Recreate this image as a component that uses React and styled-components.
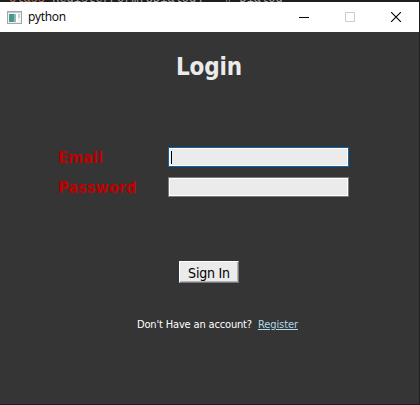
import React from "react";
import styled, { createGlobalStyle } from "styled-components";

const Global = createGlobalStyle`
  *{box-sizing:border-box}
  body{margin:0;background:#1e1e1e;overflow:hidden}
`;
const Screen = styled.div`
  width:420px;height:405px;display:flex;flex-direction:column;background:#1e1e1e;overflow:hidden;
`;
const Backdrop = styled.div`
  height:2px;flex:none;overflow:hidden;padding-left:9px;display:flex;align-items:flex-end;
`;
const Code = styled.span`
  font:12px/12px "Liberation Mono",monospace;color:#aaa;white-space:pre;margin-bottom:-3px;
`;
const Keyword = styled.span`color:#b98268;`;
const Window = styled.main`
  width:419px;height:402px;display:flex;flex-direction:column;background:#353535;
`;
const TitleBar = styled.header`
  height:30px;flex:none;background:#fff;display:flex;align-items:center;padding-left:7px;
`;
const Title = styled.span`
  font:12px/16px "Open Sans",sans-serif;color:#000;margin-left:6px;flex:1;letter-spacing:-.3px;
`;
const Control = styled.span`
  width:46px;height:30px;display:flex;align-items:center;justify-content:center;
`;
const Controls = styled.div`display:flex;`;
const Form = styled.form`
  display:flex;flex-direction:column;flex:1;font-family:"DejaVu Sans Condensed","DejaVu Sans",sans-serif;font-stretch:condensed;
`;
const Heading = styled.h1`
  margin:20px 0 0 176px;font-size:24px;line-height:30px;font-weight:700;color:#ebebeb;letter-spacing:-.2px;white-space:nowrap;
`;
const Fields = styled.div`
  margin:65px 0 0 58px;display:grid;grid-template-columns:110px 181px;row-gap:10px;
`;
const Label = styled.label`
  font-size:16px;line-height:20px;font-weight:700;color:#c00000;letter-spacing:.1px;padding-top:1px;height:20px;
`;
const Field = styled.div`
  height:20px;border:1px solid ${p => p.$focus ? "#0d63aa" : "#7a7a7a"};background:#ebebeb;box-shadow:inset 0 0 0 1px #fff;padding:3px 0 0 2px;
`;
const Caret = styled.i`display:block;width:1px;height:13px;background:#000;`;
const SignIn = styled.button`
  margin:64px 0 0 179px;width:60px;height:22px;padding:2px 0 0;border:1px solid;border-color:#fff #777 #777 #fff;
  box-shadow:inset -1px -1px #b5b5b5;background:#ebebeb;color:#000;font:14px/18px "DejaVu Sans Condensed","DejaVu Sans",sans-serif;
  font-stretch:condensed;letter-spacing:-.2px;white-space:nowrap;
`;
const Footer = styled.p`
  margin:35px 0 0 137px;display:flex;gap:6px;font-size:11px;line-height:14px;color:#fff;letter-spacing:-.16px;white-space:nowrap;
`;
const Register = styled.a`color:#add8e6;text-decoration:underline;letter-spacing:-.08px;`;

const AppIcon = () => (
  <svg width="15" height="13" viewBox="0 0 15 13" shapeRendering="crispEdges">
    <rect x=".5" y=".5" width="14" height="12" fill="#f2f2f4" stroke="#a3a5b0" />
    <rect x="1" y="1" width="13" height="1" fill="#c3cbd3" />
    <rect x="2" y="3" width="5" height="8" fill="#4d988e" />
    <rect x="7" y="3" width="2" height="8" fill="#8dbdb2" />
    <rect x="9" y="3" width="2" height="8" fill="#fff" />
    <rect x="11" y="3" width="2" height="4" fill="#ccd2d7" />
  </svg>
);

export default function App() {
  return (
    <Screen>
      <Global />
      <Backdrop aria-hidden="true"><Code><Keyword>class</Keyword> RegisterForm(QDialog)   # Dialog</Code></Backdrop>
      <Window>
        <TitleBar>
          <AppIcon />
          <Title>python</Title>
          <Controls>
            <Control><svg width="10" height="10"><path d="M0 5.5h10" stroke="#000" /></svg></Control>
            <Control><svg width="10" height="10"><path d="M.5.5h9v9h-9z" fill="none" stroke="#ccc" /></svg></Control>
            <Control><svg width="10" height="10"><path d="m0 0 10 10M10 0 0 10" stroke="#000" strokeWidth="1.1" /></svg></Control>
          </Controls>
        </TitleBar>
        <Form>
          <Heading>Login</Heading>
          <Fields>
            <Label>Email</Label>
            <Field $focus><Caret /></Field>
            <Label>Password</Label>
            <Field />
          </Fields>
          <SignIn type="button">Sign In</SignIn>
          <Footer><span>Don't Have an account?</span><Register>Register</Register></Footer>
        </Form>
      </Window>
    </Screen>
  );
}
